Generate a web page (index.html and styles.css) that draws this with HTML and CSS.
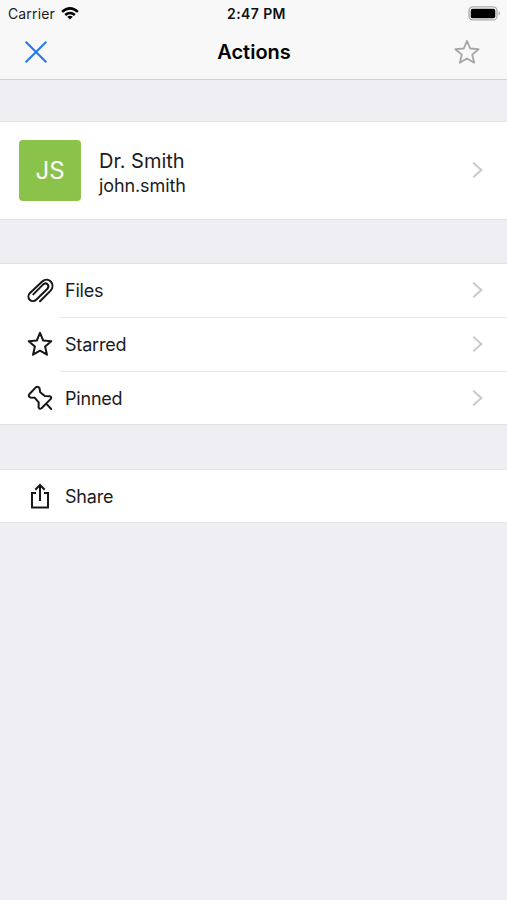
FILE: index.html
```html
<!DOCTYPE html>
<html lang="en">
<head>
<meta charset="utf-8">
<title>Actions</title>
<link rel="stylesheet" href="styles.css">
</head>
<body>
<header class="header">
  <div class="status">
    <div class="carrier"><span class="carrier-name">Carrier</span>
      <svg class="wifi" width="18" height="13" viewBox="0 0 18 13"><g fill="none" stroke="#000" stroke-width="2.5"><path d="M1.1 4.9Q9-2.1 16.9 4.9"/><path d="M4.2 8Q9 3.9 13.8 8"/></g><path d="M6.2 9.7Q9 7.6 11.8 9.7L9 12.5z"/></svg>
    </div>
    <span class="time">2:47 PM</span>
    <svg class="battery" width="33" height="15" viewBox="0 0 33 15"><rect x="1" y=".9" width="28" height="13" rx="4" fill="#fff" stroke="#aaa" stroke-width="1.3"/><rect x="2.7" y="2.7" width="24.6" height="9.5" rx="2"/><path d="M30.7 5.2q2 2.2 0 4.4z" fill="#888"/></svg>
  </div>
  <div class="nav">
    <svg class="close" width="24" height="24" viewBox="0 0 24 24"><path d="M2.2 2.2L21.8 21.8M21.8 2.2L2.2 21.8"/></svg>
    <h1 class="title">Actions</h1>
    <svg class="favorite" width="28" height="28" viewBox="0 0 28 28"><path d="M14 2.8L17.2 10.5L25.6 11.2L19.2 16.6L21.2 24.7L14 20.4L6.8 24.7L8.8 16.6L2.4 11.2L10.8 10.5z"/></svg>
  </div>
</header>
<main>
  <section class="group">
    <div class="profile">
      <div class="avatar">JS</div>
      <div class="person"><div class="name">Dr. Smith</div><div class="login">john.smith</div></div>
      <svg class="chevron" width="12" height="18" viewBox="0 0 12 18"><path d="M2.2 1.8L10.4 9L2.2 16.2"/></svg>
    </div>
  </section>
  <section class="group">
    <div class="row">
      <svg class="icon" width="28" height="28" viewBox="0 0 28 28"><path d="M14 25.2L24.4 14.9C30.2 8.8 22.9-.2 16.2 5.4L4 16.9C-.6 21.6 5.7 28.1 10.5 23.5L21.2 13C24.4 9.5 20.3 5.5 17 8.6L7.3 18.4"/></svg>
      <div class="cell"><span class="label">Files</span><svg class="chevron" width="12" height="18" viewBox="0 0 12 18"><path d="M2.2 1.8L10.4 9L2.2 16.2"/></svg></div>
    </div>
    <div class="row">
      <svg class="icon" width="28" height="28" viewBox="0 0 28 28"><path d="M14 2.8L17.2 10.5L25.3 11.2L19.1 16.6L21 24.7L14 20.6L7 24.7L8.9 16.6L2.7 11.2L10.8 10.5z"/></svg>
      <div class="cell"><span class="label">Starred</span><svg class="chevron" width="12" height="18" viewBox="0 0 12 18"><path d="M2.2 1.8L10.4 9L2.2 16.2"/></svg></div>
    </div>
    <div class="row">
      <svg class="icon" width="28" height="28" viewBox="0 0 28 28"><path d="M9.8 3.4Q12 1.9 13.4 3.8L14.2 8.2L18.8 12L23.8 12.2Q26 13 24.8 14.9L15.5 24.2Q13.5 25.6 12.6 23.4L12.7 18.4L8.8 13.8L4.3 13.4Q1.9 12.4 3.3 10.2zM20.2 19.6L25.2 25"/></svg>
      <div class="cell"><span class="label">Pinned</span><svg class="chevron" width="12" height="18" viewBox="0 0 12 18"><path d="M2.2 1.8L10.4 9L2.2 16.2"/></svg></div>
    </div>
  </section>
  <section class="group share-group">
    <div class="row share-row">
      <svg class="icon square" width="28" height="28" viewBox="0 0 28 28"><path d="M10 11H6V25.5H22V11H18M14 19V3M9.3 7.7L14 3L18.7 7.7"/></svg>
      <div class="cell"><span class="label">Share</span></div>
    </div>
  </section>
</main>
</body>
</html>
```
FILE: styles.css
```css
* { box-sizing: border-box; }
body {
  margin: 0;
  min-height: 900px;
  background: #efeef3;
  color: #1c1c1e;
  font-family: Inter, "Liberation Sans", sans-serif;
}
svg { display: block; flex: none; }
.header { height: 80px; background: #f8f8f8; border-bottom: 1px solid #d3d3d5; }
.status {
  height: 26px;
  padding: 1px 6px 0 8px;
  display: grid;
  grid-template-columns: 1fr auto 1fr;
  align-items: center;
}
.carrier { display: flex; align-items: center; gap: 6px; font-size: 14px; }
.carrier-name { letter-spacing: .14px; }
.wifi { margin-top: -1px; }
.time { padding-left: 4px; font-size: 14px; font-weight: 600; color: #111; letter-spacing: .4px; }
.battery { justify-self: end; margin-top: -1px; }
.nav {
  height: 52px;
  padding: 0 26px 0 24px;
  display: grid;
  grid-template-columns: 1fr auto 1fr;
  align-items: center;
}
.title { margin: 0 0 0 3px; font-size: 20px; line-height: 26px; font-weight: 600; color: #000; }
.favorite { justify-self: end; }
.close path { fill: none; stroke: #2377e8; stroke-width: 2; stroke-linecap: round; }
.favorite path { fill: none; stroke: #a5a5a8; stroke-width: 1.8; stroke-linejoin: round; }
.group {
  margin-top: 41px;
  background: #fff;
  border-top: 1px solid #e4e4e7;
  border-bottom: 1px solid #e4e4e7;
}
.group + .group { margin-top: 43px; }
.group + .share-group { margin-top: 44px; }
.profile { height: 97px; padding: 0 24px 0 19px; display: flex; align-items: center; }
.profile .chevron { margin-top: -2px; }
.avatar {
  width: 62px;
  height: 61px;
  border-radius: 4px;
  background: #8bc34a;
  color: #fff;
  font-size: 24px;
  display: flex;
  align-items: center;
  justify-content: center;
}
.person { flex: 1; padding: 4px 0 0 18px; }
.name { font-size: 20px; line-height: 26px; }
.login { font-size: 18px; line-height: 24px; letter-spacing: -.1px; }
.chevron path { fill: none; stroke: #c8c8cb; stroke-width: 1.9; }
.row { display: flex; height: 54px; align-items: center; padding-left: 26px; }
.row:last-child { height: 52px; }
.row.share-row { height: 52px; }
.icon { margin: -2px 6px 0 0; }
.row:last-child .icon { margin-top: 0; }
.icon path { fill: none; stroke: #161616; stroke-width: 2; stroke-linecap: round; stroke-linejoin: round; }
.icon.square path { stroke-linecap: butt; stroke-linejoin: miter; }
.cell {
  flex: 1;
  height: 100%;
  padding: 0 24px 0 5px;
  display: flex;
  align-items: center;
  justify-content: space-between;
  border-bottom: 1px solid #e8e8ea;
}
.cell .chevron { margin-top: -1px; }
.row:last-child .cell { border-bottom: 0; padding-top: 1px; }
.label { font-size: 18px; line-height: 24px; letter-spacing: -.2px; }
```
